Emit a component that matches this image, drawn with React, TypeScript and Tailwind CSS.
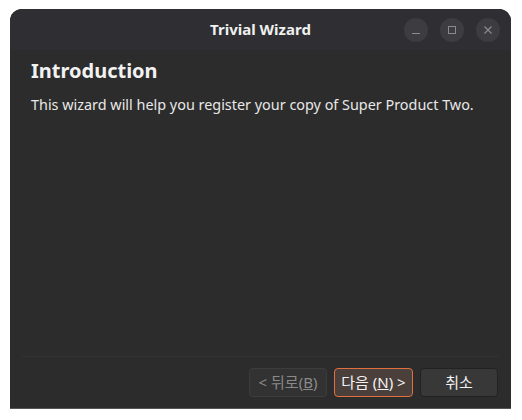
import React from 'react';

const font = { fontFamily: '"Noto Sans", "Noto Sans CJK KR", sans-serif' };

const App: React.FC = () => {
  return (
    <div className="w-[522px] h-[420px] bg-white relative" style={font}>
      <div className="absolute left-[10px] top-[9px] w-[501px] h-[400px] flex flex-col bg-[#2c2c2c] rounded-t-[12px] overflow-hidden border-b border-[#555]">
        <div className="h-[41px] shrink-0 bg-[#2f2f33] flex items-center justify-center relative">
          <span className="text-[15px] font-bold text-[#f0f0f0]">Trivial Wizard</span>
          <div className="absolute right-[11px] top-[9px] flex gap-[12px]">
            <div className="w-[24px] h-[24px] rounded-full bg-[#3d3d41] flex items-center justify-center">
              <div className="w-[8px] h-[1px] bg-[#8a8a8e] mt-[6px]" />
            </div>
            <div className="w-[24px] h-[24px] rounded-full bg-[#3d3d41] flex items-center justify-center">
              <div className="w-[8px] h-[8px] border border-[#8a8a8e]" />
            </div>
            <div className="w-[24px] h-[24px] rounded-full bg-[#3d3d41] flex items-center justify-center">
              <svg width="10" height="10" viewBox="0 0 10 10">
                <path d="M1.5 1.5 L8.5 8.5 M8.5 1.5 L1.5 8.5" stroke="#8a8a8e" strokeWidth="1.2" />
              </svg>
            </div>
          </div>
        </div>
        <div className="flex-1 flex flex-col px-[21px] pt-[7px]">
          <div className="text-[20px] font-bold text-[#f2f2f2] leading-[28px]">Introduction</div>
          <div className="mt-[10px] text-[14.4px] text-[#e8e8e8] leading-[20px]">
            This wizard will help you register your copy of Super Product Two.
          </div>
          <div className="flex-1" />
        </div>
        <div className="mx-[12px] h-[1px] bg-[#333333]" />
        <div className="flex justify-end gap-[7px] pr-[13px] pt-[11px] pb-[11px]">
          <button className="w-[78px] h-[29px] rounded-[4px] border border-[#3c3c3c] bg-[#323232] text-[15px] text-[#8a8a8a]">
            &lt; 뒤로(<span className="underline">B</span>)
          </button>
          <button className="w-[79px] h-[29px] rounded-[4px] border border-[#e0703f] bg-[#4a3f3b] text-[15px] text-[#f2f2f2]">
            다음 (<span className="underline">N</span>) &gt;
          </button>
          <button className="w-[78px] h-[29px] rounded-[4px] border border-[#222] bg-[#383838] text-[15px] text-[#f2f2f2]">
            취소
          </button>
        </div>
      </div>
    </div>
  );
};

export default App;
